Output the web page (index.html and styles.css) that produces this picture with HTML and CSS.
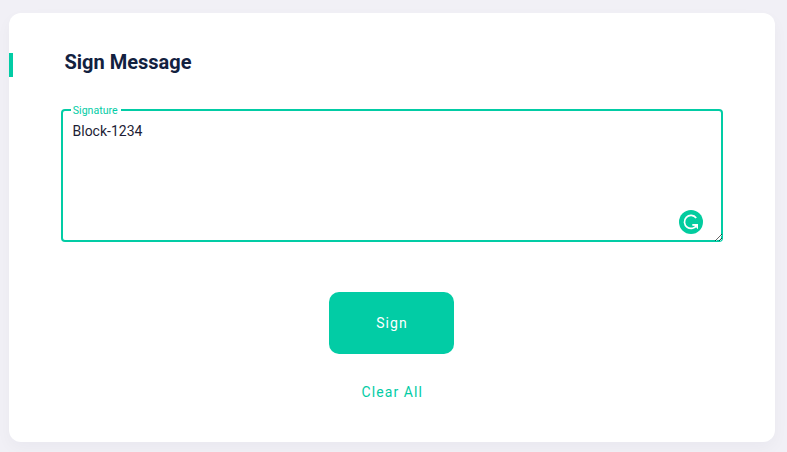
FILE: index.html
```html
<!DOCTYPE html>
<html lang="en">
<head>
<meta charset="utf-8">
<title>Sign Message</title>
<link rel="stylesheet" href="styles.css">
</head>
<body>
<main class="card">
  <h1 class="title">Sign Message</h1>
  <div class="field">
    <label class="label" for="signature">Signature</label>
    <textarea class="input" id="signature" spellcheck="false">Block-1234</textarea>
    <svg class="badge" viewBox="0 0 24 24" aria-hidden="true">
      <circle cx="12" cy="12" r="12" fill="#02cc9f"/>
      <path d="M17.2 8.1A6.5 6.5 0 1 0 17.8 14.8H13.3" fill="none" stroke="#fff" stroke-width="1.7"/>
      <path d="M14.3 14H19V19.2L17.2 17.4V15.6H14.3Z" fill="#fff"/>
    </svg>
  </div>
  <div class="actions">
    <button class="sign" type="button">Sign</button>
    <button class="clear" type="button">Clear All</button>
  </div>
</main>
</body>
</html>
```
FILE: styles.css
```css
* { box-sizing: border-box; }
body { margin: 0; height: 452px; padding: 13px 12px 10px 9px; background: #f1f0f6; font-family: Roboto, sans-serif; overflow: hidden; }
.card { height: 429px; padding-top: 37px; background: #fff; border-radius: 12px; box-shadow: 0 6px 16px rgba(30, 40, 70, 0.035); }
.title { margin: 3px 0 0; height: 24px; padding-left: 51.5px; border-left: 4px solid #02cca5; font-size: 20px; line-height: 18px; font-weight: 700; color: #12213f; }
.field { position: relative; width: 662px; height: 133px; margin: 32px 0 0 52px; }
.input { display: block; width: 100%; height: 100%; padding: 12px 11.5px; border: 0; border-radius: 4px; box-shadow: inset 0 0 0 2px #02cca5; outline: 0; resize: vertical; background: #fff; color: #1d1d35; font: 14px/20px Roboto, sans-serif; }
.label { position: absolute; left: 10px; top: -5px; padding: 0 3.6px 0 1.8px; background: #fff; color: #02cca5; font-size: 10.6px; line-height: 13px; }
.badge { position: absolute; left: 618px; top: 101px; width: 24px; height: 24px; }
.actions { width: 125px; margin: 50px 0 0 320px; display: flex; flex-direction: column; align-items: center; }
.sign, .clear { border: 0; font: 14px/20px Roboto, sans-serif; letter-spacing: 1.1px; padding: 0; white-space: nowrap; }
.sign { width: 125px; height: 62px; padding-left: 1px; border-radius: 10px; background: #02cca5; color: #fff; }
.clear { margin: 28px 0 0 1.5px; background: none; color: #02cca5; }
```
